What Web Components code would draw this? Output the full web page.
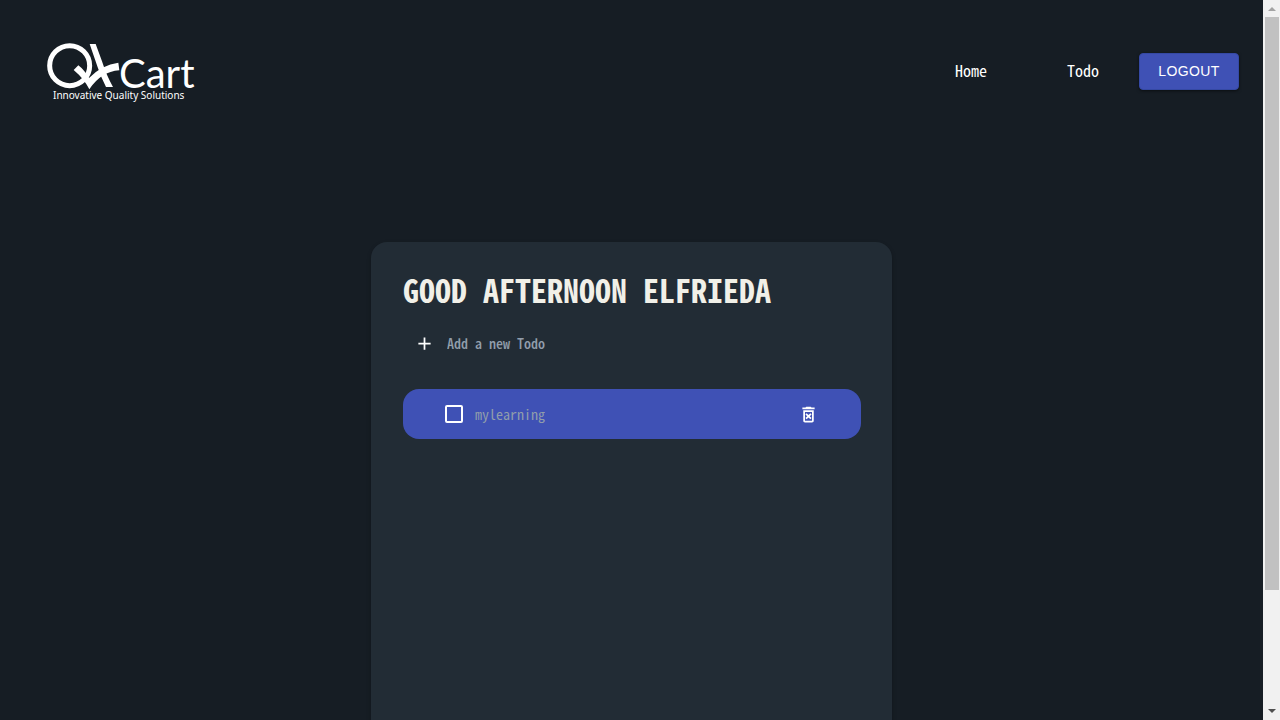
<!DOCTYPE html>
<html lang="en">
<head>
<meta charset="utf-8">
<title>QKart Todo</title>
<style>
:root{--bg:#161d24;--card:#222c35;--primary:#3f51b5;--muted:#919eab;--mono:"Noto Sans CJK JP",monospace}
body{margin:0;background:var(--bg);color:#fff;font-family:var(--mono);font-feature-settings:"hwid"}
</style>
</head>
<body>
<todo-app></todo-app>
<script>
const define=(name,html)=>customElements.define(name,class extends HTMLElement{
  constructor(){super();this.attachShadow({mode:"open"}).innerHTML=html}
});

define("brand-logo",`<style>
:host{display:block}
svg{display:block}
.word{font:40px Lato,sans-serif}
.tag{font:10px "Noto Sans",sans-serif}
</style>
<svg width="148" height="60" viewBox="47 42 148 60" fill="#fff" role="img" aria-label="QKart">
<g transform="translate(30 30) scale(.33333)">
<circle cx="119" cy="107" r="60" fill="none" stroke="#fff" stroke-width="15"/>
<path d="M179 42H197L216 94Q230 138 249 171H228Q213 142 203 112Z"/>
<path d="M131 120L145 106Q162 119 177 144Q216 104 265 98L268 121Q213 125 178 178Q163 147 131 120Z"/>
</g>
<text class="word" x="119" y="88">Cart</text>
<text class="tag" x="53" y="99">Innovative Quality Solutions</text>
</svg>`);

define("nav-link",`<style>
:host{display:block;padding:0 40px 2px}
a{color:#fff;text-decoration:none;font-size:16px;line-height:24px}
</style><a href="#"><slot></slot></a>`);

define("primary-button",`<style>
:host{display:block}
button{display:block;box-sizing:border-box;min-width:100px;border:1px solid #3549a4;border-radius:4px;background:var(--primary);color:#fff;padding:6px 16px;font:14px/23px "Liberation Sans",sans-serif;letter-spacing:.4px;box-shadow:0 1px 3px #0008}
</style><button type="button"><slot></slot></button>`);

define("site-header",`<style>
:host{display:block}
header{display:flex;align-items:center;justify-content:space-between;padding:42px 24px 0 47px}
nav{display:flex;align-items:center;padding-bottom:2px}
</style>
<header><brand-logo></brand-logo><nav><nav-link>Home</nav-link><nav-link>Todo</nav-link><primary-button>LOGOUT</primary-button></nav></header>`);

define("new-todo",`<style>
:host{display:block}
form{display:flex;align-items:center;gap:12px;padding:0 11px;height:40px}
button{all:unset;display:block;height:21px}
svg{display:block}
input{all:unset;flex:1;font:500 14px/24px var(--mono);font-feature-settings:"hwid";color:#fff}
input::placeholder{color:var(--muted);opacity:1}
</style>
<form><button type="button" aria-label="Add"><svg width="21" height="21" viewBox="0 0 24 24" fill="#fff"><path d="M19 13h-6v6h-2v-6H5v-2h6V5h2v6h6v2z"/></svg></button>
<input type="text" placeholder="Add a new Todo" aria-label="New todo"></form>`);

define("todo-item",`<style>
:host{display:flex;align-items:center;height:50px;border-radius:16px;background:var(--primary);padding:0 42px}
input{appearance:none;box-sizing:border-box;width:18px;height:18px;margin:0 12px 0 0;border:2px solid #fff;border-radius:2px}
label{flex:1;color:var(--muted);font-size:14px;line-height:24px}
button{all:unset;display:block}
svg{display:block}
</style>
<input type="checkbox" id="done"><label for="done"><slot></slot></label>
<button type="button" aria-label="Delete"><svg width="21" height="21" viewBox="0 0 24 24" fill="#fff"><path d="M14.12 10.47L12 12.59l-2.13-2.12-1.41 1.41L10.59 14l-2.12 2.12 1.41 1.41L12 15.41l2.12 2.12 1.41-1.41L13.41 14l2.12-2.12zM15.5 4l-1-1h-5l-1 1H5v2h14V4zM6 19c0 1.1.9 2 2 2h8c1.1 0 2-.9 2-2V7H6v12zM8 9h8v10H8V9z"/></svg></button>`);

define("todo-card",`<style>
:host{display:block;box-sizing:border-box;width:521px;max-width:100%;min-height:600px;padding:27px 31px 32px 32px;border-radius:16px;background:var(--card);box-shadow:0 2px 4px #0004}
h1{margin:0 0 14px;color:#f1f0e8;font-size:32px;line-height:40px;font-weight:700}
todo-item{margin-top:26px}
</style>
<h1><slot name="greeting"></slot></h1><new-todo></new-todo><todo-item><slot></slot></todo-item>`);

define("scroll-rail",`<style>
:host{display:flex;flex-direction:column;align-items:center;background:#f1f1f1}
svg{display:block;flex:none}
.track{flex:1;align-self:stretch;padding:0 1px 0 2px}
.thumb{height:83.5%;background:#c1c1c1}
</style>
<svg width="17" height="17"><path d="M5 11L9 7L13 11Z" fill="#a3a3a3"/></svg>
<div class="track"><div class="thumb"></div></div>
<svg width="17" height="17"><path d="M5 6L9 10L13 6Z" fill="#505050"/></svg>`);

define("todo-app",`<style>
:host{display:grid;grid-template-columns:minmax(0,1fr) 17px;height:100vh;overflow:hidden}
.page{overflow:hidden}
main{display:flex;justify-content:center;padding-top:140px}
</style>
<div class="page"><site-header></site-header><main><todo-card><span slot="greeting">GOOD AFTERNOON ELFRIEDA</span>mylearning</todo-card></main></div>
<scroll-rail aria-hidden="true"></scroll-rail>`);
</script>
</body>
</html>
